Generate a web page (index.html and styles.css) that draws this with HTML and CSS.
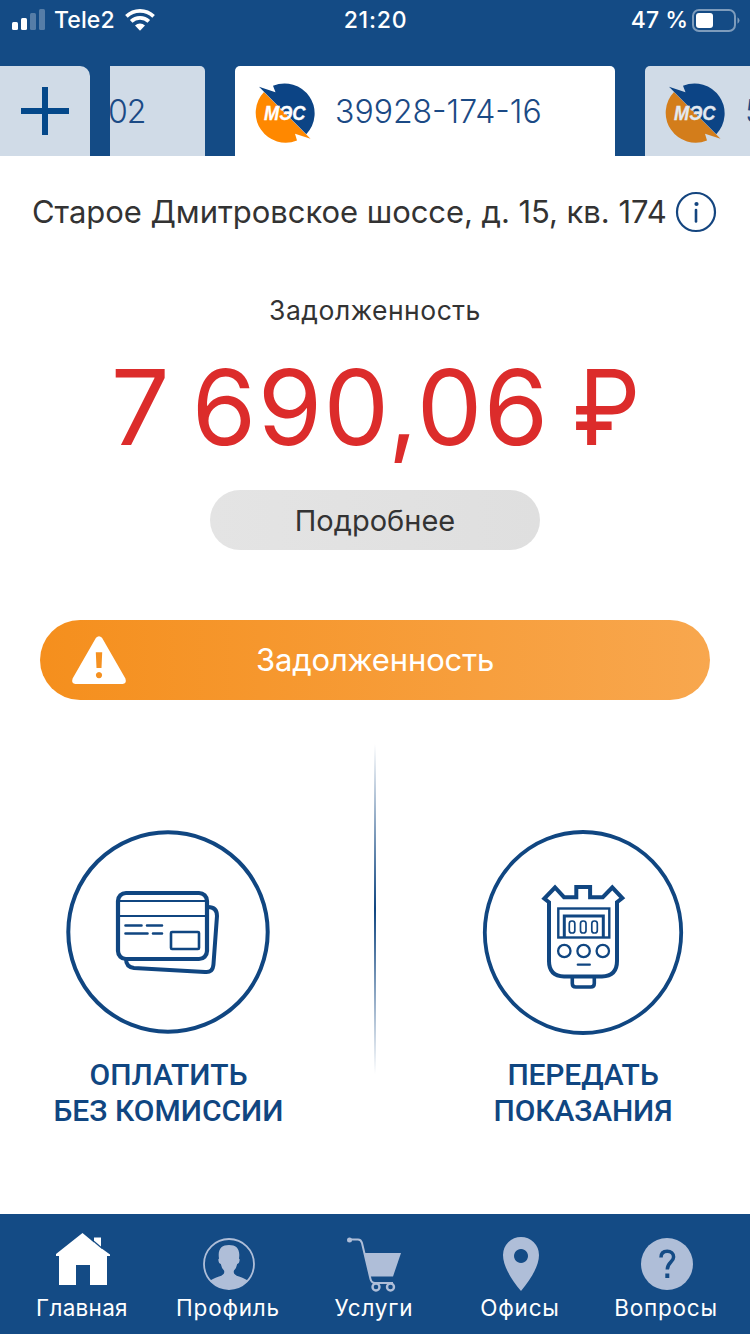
FILE: index.html
```html
<!DOCTYPE html>
<html lang="ru">
<head>
<meta charset="utf-8">
<title>МЭС</title>
<link rel="stylesheet" href="styles.css">
</head>
<body>
<svg width="0" height="0" class="defs">
  <symbol id="logo" viewBox="0 0 60 60">
    <path class="logo-orange" d="M9 9 55.5 55.8 40 50.7 42 57.5A30 30 0 0 1 9 9Z"/>
    <path class="logo-blue" d="M4 3.8 20.5 9.2 18 2.8A30 30 0 0 1 51.3 51.2Z"/>
    <text class="logo-text" x="9" y="37" textLength="41.500" lengthAdjust="spacingAndGlyphs">МЭС</text>
  </symbol>
</svg>
<header class="header">
  <div class="status">
    <div class="status-left">
      <svg class="signal" width="34" height="22" viewBox="0 0 34 22"><g fill="#fff"><rect x="0" y="13" width="6" height="8" rx="1.5"/><rect x="9" y="9" width="6" height="12" rx="1.5"/><g opacity=".28"><rect x="18" y="4" width="6" height="17" rx="1.5"/><rect x="27" y="0" width="6" height="21" rx="1.5"/></g></g></svg>
      <span class="carrier">Tele2</span>
      <svg class="wifi" width="30" height="22" viewBox="0 0 30 22"><g fill="none" stroke="#fff" stroke-width="3.7"><path d="M1.4 7.4a19.5 19.5 0 0 1 27.2 0"/><path d="M6.2 12.4a12.6 12.6 0 0 1 17.6 0"/></g><path fill="#fff" d="M15 21.8l-5-5.2a7.2 7.2 0 0 1 10 0z"/></svg>
    </div>
    <span class="time">21:20</span>
    <div class="status-right">
      <span class="percent">47 %</span>
      <svg width="48" height="23" viewBox="0 0 48 23"><rect x="1" y="1" width="42" height="21" rx="6" fill="none" stroke="#fff" stroke-opacity=".45" stroke-width="2"/><rect x="4" y="4" width="17" height="15" rx="3" fill="#fff"/><path fill="#fff" fill-opacity=".45" d="M45.5 8.2q2 1.5 2 3.3t-2 3.3z"/></svg>
    </div>
  </div>
  <div class="tabs">
    <div class="add"><svg width="48" height="48" viewBox="0 0 48 48"><path d="M24 0V48M0 24H48" stroke="#04488a" stroke-width="6"/></svg></div>
    <div class="tab tab-prev">02</div>
    <div class="tab tab-active"><svg width="60" height="60"><use href="#logo"/></svg><span>39928-174-16</span></div>
    <div class="tab tab-next"><svg width="60" height="60"><use href="#logo"/></svg><span>5</span></div>
  </div>
</header>
<main class="main">
  <div class="address">
    <span>Старое Дмитровское шоссе, д. 15, кв. 174</span>
    <svg width="40" height="40" viewBox="0 0 40 40"><circle cx="20" cy="20" r="19" fill="none" stroke="#14457f" stroke-width="2.2"/><circle cx="20.5" cy="12" r="2.1" fill="#14457f"/><path d="M20 18V29.5" stroke="#14457f" stroke-width="2.6" stroke-linecap="round"/></svg>
  </div>
  <div class="debt-label">Задолженность</div>
  <div class="amount">7 690,06 <span class="currency">₽</span></div>
  <div class="more">Подробнее</div>
  <div class="banner">
    <svg width="54" height="48" viewBox="0 0 54 48"><path fill="#fff" fill-rule="evenodd" d="M24 1.8Q27-1.5 30 1.8L53.4 42.5Q55 47.5 50.5 48H3.5Q-1 47.5.6 42.5ZM23.8 16.2 24.5 32H29.5L30.2 16.2ZM27 36a3.1 3.1 0 1 0 .01 0Z"/></svg>
    <span>Задолженность</span>
  </div>
  <div class="actions">
    <div class="action">
      <svg width="204" height="204" viewBox="0 0 204 204" fill="none" stroke="#104681">
        <circle cx="102" cy="102" r="99.7" stroke-width="4"/>
        <path stroke-width="4" d="M60 124v5q0 8 8 9l71 4q8 1 8.500-8l3.500-48q0-9-9-9"/>
        <rect x="52" y="63" width="89" height="66" rx="8" stroke-width="4.200" fill="#fff"/>
        <path stroke-width="2" d="M53 71h87M53 86h87"/>
        <path stroke-width="2.600" stroke-linecap="round" d="M59.500 95.500h16M81 95.500h15M59.500 103.500h22M87 103.500h9"/>
        <rect x="105" y="102" width="28" height="17" rx="1" stroke-width="2.600"/>
      </svg>
      <div class="caption">ОПЛАТИТЬ<br>БЕЗ КОМИССИИ</div>
    </div>
    <div class="divider"></div>
    <div class="action">
      <svg width="204" height="204" viewBox="0 0 204 204" fill="none" stroke="#104681">
        <ellipse cx="102" cy="102.500" rx="98.200" ry="100.500" stroke-width="3.800"/>
        <g transform="translate(.8)">
          <path stroke-width="4" d="M67.200 72.200 62.500 68.500 73.200 57.500 82.200 67.200H94.500V57H108.300V67.200H121L130.500 57.500 140.500 68 135.200 72.200V131Q135.200 146 120.200 146.500H82.200Q67.200 146 67.200 131Z"/>
          <path stroke-width="3.600" d="M90.500 147.500v6q0 3.500 3.500 3.500h15q3.500 0 3.500-3.500v-6"/>
          <rect x="76.500" y="78.500" width="51" height="29" stroke-width="2.400"/>
          <path stroke-width="3" d="M82.500 107V86h39v21"/>
          <g stroke-width="1.700"><rect x="87.500" y="91" width="5.500" height="12" rx="2.500"/><rect x="98.700" y="91" width="5.500" height="12" rx="2.500"/><rect x="110" y="91" width="5.500" height="12" rx="2.500"/></g>
          <g stroke-width="2.300"><circle cx="82.500" cy="121" r="6.200"/><circle cx="101.800" cy="121" r="6.200"/><circle cx="121" cy="121" r="6.200"/><path stroke-linecap="round" d="M96 134.700h12"/></g>
        </g>
      </svg>
      <div class="caption caption-narrow">ПЕРЕДАТЬ<br>ПОКАЗАНИЯ</div>
    </div>
  </div>
</main>
<nav class="nav">
  <div class="item item-current"><svg width="54" height="60" viewBox="0 0 54 60"><g transform="translate(1)"><path fill="#fff" d="M26.500 5 38 14.500V9.500H45V20L54 26.500V28H51V57H34V37H20V57H3V28H0V26Z"/><path d="M36 11.800 46 20.200" stroke="#144b85" stroke-width="1.200"/></g></svg><span>Главная</span></div>
  <div class="item"><svg width="54" height="60" viewBox="0 0 54 60"><circle cx="28" cy="36" r="25" fill="none" stroke="#afbed8" stroke-width="1.800"/><path transform="translate(1)" fill="#afbed8" d="M8 53Q9.500 51 17 48.500 23.500 46.500 22 42.500 19.500 40 18.800 36 16.600 35.500 16.300 31.500L17 30.500C15.500 21 19.500 17 27 17S38.500 21 37 30.500L37.700 31.500Q37.400 35.500 35.200 36 34.500 40 32 42.500 30.500 46.500 37 48.500 44.500 51 46 53A26 26 0 0 1 8 53Z"/></svg><span>Профиль</span></div>
  <div class="item"><svg width="54" height="60" viewBox="0 0 54 60"><g fill="none" stroke="#afbed8"><path stroke-width="2" d="M3 11.500H11Q14 11.500 15 15L23.500 51Q24.500 55 28 55H46"/><circle cx="29" cy="59" r="3.500" stroke-width="2.400"/><circle cx="43.500" cy="59" r="3.500" stroke-width="2.400"/></g><circle cx="2.500" cy="12" r="2.500" fill="#afbed8"/><path fill="#afbed8" d="M17.500 25H54L46 48.500H23Z"/></svg><span>Услуги</span></div>
  <div class="item"><svg width="54" height="60" viewBox="0 0 54 60"><path fill="#afbed8" fill-rule="evenodd" d="M28 9A18 18 0 0 1 46 27C46 38 38 51 28 63 18 51 10 38 10 27A18 18 0 0 1 28 9ZM28 21A7 7 0 1 0 28.010 21Z"/></svg><span>Офисы</span></div>
  <div class="item"><svg width="54" height="60" viewBox="0 0 54 60"><circle cx="28" cy="36" r="26" fill="#afbed8"/><path d="M22 29.500C22 25 24.500 23.200 28.200 23.200S34.600 25.500 34.600 29C34.600 34 28.300 34.500 28.300 41.500" fill="none" stroke="#144b85" stroke-width="3.500"/><path fill="#144b85" d="M26.300 45.500h4v4.500h-4z"/></svg><span>Вопросы</span></div>
</nav>
</body>
</html>
```
FILE: styles.css
```css
* { box-sizing: border-box; }
body {
  margin: 0;
  width: 750px;
  height: 1334px;
  overflow: hidden;
  display: flex;
  flex-direction: column;
  background: #fff;
  font-family: Inter, "Liberation Sans", sans-serif;
  color: #333;
}
svg { display: block; flex: none; overflow: visible; }
.defs { position: absolute; }
.logo-orange { fill: var(--logo-accent, #ff8800); }
.logo-blue { fill: #0c4485; }
.logo-text {
  fill: var(--logo-ink, #fff);
  stroke: var(--logo-ink, #fff);
  stroke-width: .3px;
  font: italic 700 19.500px "Liberation Sans", sans-serif;
}

.header { height: 156px; background: #144b85; flex: none; }
.status {
  height: 66px;
  padding: 0 10px 26px 12px;
  display: grid;
  grid-template-columns: 1fr auto 1fr;
  align-items: center;
  color: #fff;
  font-size: 23px;
  font-weight: 500;
  line-height: 40px;
}
.status-left, .status-right { display: flex; align-items: center; }
.status-right { justify-content: flex-end; gap: 4px; }
.carrier { margin-left: 8px; letter-spacing: .1px; }
.wifi { margin-left: 10px; }
.time { letter-spacing: .8px; margin-right: 1px; }

.tabs { display: flex; height: 90px; overflow: hidden; }
.add {
  width: 90px;
  flex: none;
  border-radius: 0 10px 0 0;
  background: #d0dbe7;
  display: flex;
  align-items: center;
  justify-content: center;
}
.tab {
  height: 90px;
  flex: none;
  display: flex;
  align-items: center;
  gap: 20px;
  border-radius: 5px 5px 0 0;
  color: #1b4a85;
  font-size: 32px;
  font-weight: 300;
}
.tab span { padding-bottom: 4px; }
.tab-prev { width: 95px; margin-left: 20px; background: #d0dbe7; border-radius: 0 5px 0 0; overflow: hidden; text-indent: -2px; letter-spacing: -1px; }
.tab-active { width: 380px; margin-left: 30px; padding: 4px 20px 0; background: #fff; }
.tab-next { width: 380px; margin-left: 30px; padding: 4px 20px 0; background: #d0dbe7; }
.tab-next svg { --logo-accent: #d37d1b; --logo-ink: #e3e9f0; }

.main { height: 1058px; flex: none; display: flex; flex-direction: column; align-items: center; }
.address {
  width: 100%;
  margin-top: 36px;
  padding: 0 34px 0 32px;
  height: 40px;
  display: flex;
  align-items: center;
  justify-content: space-between;
  font-size: 31px;
  letter-spacing: -.05px;
  white-space: nowrap;
}
.address span { padding-bottom: 2px; }
.debt-label { margin-top: 58px; height: 40px; line-height: 40px; font-size: 26.500px; letter-spacing: .5px; }
.amount {
  margin-top: 15px;
  padding-left: 4px;
  height: 124px;
  line-height: 124px;
  font-size: 104px;
  letter-spacing: 1.400px;
  word-spacing: -10px;
  color: #dc2c2b;
  white-space: nowrap;
}
.currency { display: inline-block; letter-spacing: 0; transform: scaleX(.93); }
.more {
  margin-top: 21px;
  width: 330px;
  height: 60px;
  border-radius: 30px;
  background: linear-gradient(90deg, #e4e4e4, #dfdfdf);
  text-align: center;
  line-height: 62px;
  font-size: 29px;
}
.banner {
  margin-top: 70px;
  width: 670px;
  height: 80px;
  padding: 0 32px;
  border-radius: 40px;
  background: linear-gradient(90deg, #f58f1d, #f8a74e);
  display: grid;
  grid-template-columns: 54px 1fr 54px;
  align-items: center;
  text-align: center;
  color: #fff;
  font-size: 31px;
  letter-spacing: -.15px;
}
.banner span { padding-bottom: 1px; }
.actions { display: flex; width: 100%; margin-top: 40px; height: 474px; }
.action { flex: none; width: 336px; padding-top: 90px; display: flex; flex-direction: column; align-items: center; }
.divider { flex: none; width: 2px; height: 330px; margin: 4px 39px 0 38px; background: linear-gradient(#fff, #104681 50%, #fff); }
.caption {
  margin-top: 23px;
  padding-left: 1px;
  font: 500 30px/36px Roboto, sans-serif;
  color: #104681;
  text-align: center;
  white-space: nowrap;
}
.caption-narrow { padding-left: 0; letter-spacing: -.15px; }

.nav { height: 120px; flex: none; background: #144b85; display: flex; padding: 0 11px 0 9px; }
.item {
  width: 146px;
  padding-top: 14px;
  display: flex;
  flex-direction: column;
  align-items: center;
  color: #fff;
  font-size: 22.500px;
  line-height: 30px;
}
.item span { margin-top: 5px; letter-spacing: .8px; }
.item-current span { letter-spacing: .3px; }
```
